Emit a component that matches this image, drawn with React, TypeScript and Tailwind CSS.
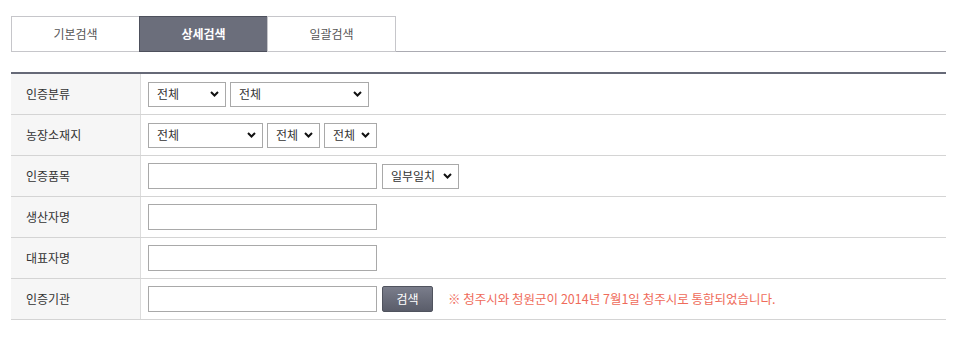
import React from "react";

const Chevron = () => (
  <svg width="9" height="6" viewBox="0 0 9 6" className="shrink-0">
    <polyline points="1,1 4.5,4.5 8,1" fill="none" stroke="#111" strokeWidth="2" />
  </svg>
);

const Select = ({ w, label }: { w: string; label: string }) => (
  <div
    className={`${w} h-[25px] border border-[#a9a9a9] bg-white flex items-center justify-between pl-[8px] pr-[6px] text-[12px] text-[#333]`}
  >
    <span>{label}</span>
    <Chevron />
  </div>
);

const Input = () => <div className="w-[229px] h-[26px] border border-[#a9a9a9] bg-white" />;

const Row = ({ label, children }: { label: string; children?: React.ReactNode }) => (
  <div className="flex h-[41px] border-b border-[#d4d4d4]">
    <div className="w-[130px] bg-[#f6f6f6] border-r border-[#dcdcdc] flex items-center pl-[15px] text-[12px] text-[#333]">
      {label}
    </div>
    <div className="flex-1 flex items-center pl-[7px] gap-[4px]">{children}</div>
  </div>
);

export default function App() {
  return (
    <div
      className="w-[971px] h-[345px] bg-white pt-[16px] pl-[11px]"
      style={{ fontFamily: '"Noto Sans CJK KR", "Noto Sans", sans-serif' }}
    >
      <div className="w-[935px]">
        <div className="flex border-b border-[#ababb2] h-[36px]">
          <div className="w-[129px] h-[36px] border border-[#c6c6ca] bg-white flex items-center justify-center text-[12px] text-[#555]">
            기본검색
          </div>
          <div className="-ml-px w-[129px] h-[36px] border border-[#4d505c] bg-[#6b6e7b] flex items-center justify-center text-[12px] font-bold text-white">
            상세검색
          </div>
          <div className="-ml-px w-[129px] h-[36px] border border-[#c6c6ca] bg-white flex items-center justify-center text-[12px] text-[#555]">
            일괄검색
          </div>
        </div>

        <div className="mt-[20px] border-t-2 border-[#666977]">
          <Row label="인증분류">
            <Select w="w-[78px]" label="전체" />
            <Select w="w-[139px]" label="전체" />
          </Row>
          <Row label="농장소재지">
            <Select w="w-[115px]" label="전체" />
            <Select w="w-[53px]" label="전체" />
            <Select w="w-[53px]" label="전체" />
          </Row>
          <Row label="인증품목">
            <Input />
            <div className="ml-px">
              <Select w="w-[77px]" label="일부일치" />
            </div>
          </Row>
          <Row label="생산자명">
            <Input />
          </Row>
          <Row label="대표자명">
            <Input />
          </Row>
          <Row label="인증기관">
            <Input />
            <div className="ml-px w-[51px] h-[26px] rounded-[2px] border border-[#50535e] bg-gradient-to-b from-[#7a7d8b] to-[#5a5d6a] flex items-center justify-center text-[12px] text-white">
              검색
            </div>
            <div className="ml-[11px] text-[12.5px] text-[#ef6b5a]">
              ※ 청주시와 청원군이 2014년 7월1일 청주시로 통합되었습니다.
            </div>
          </Row>
        </div>
      </div>
    </div>
  );
}
